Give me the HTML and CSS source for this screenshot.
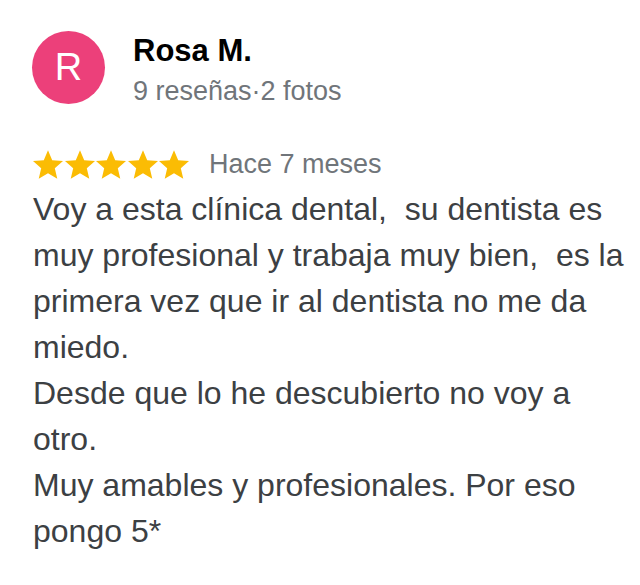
FILE: index.html
```
<!DOCTYPE html>
<html>

<head>
    <meta charset="UTF-8">
    <title>Reseña</title>
    <link rel="stylesheet" href="styles.css">
</head>

<body>
    <article class="resena">
        <header class="autor">
            <div class="avatar">R</div>
            <div class="autor-info">
                <h2 class="autor-nombre">Rosa M.</h2>
                <p class="autor-meta">9 reseñas·2 fotos</p>
            </div>
        </header>

        <div class="valoracion">
            <div class="estrellas">
                <svg viewBox="2 2 20 19"><path d="M12 17.27L18.18 21l-1.64-7.03L22 9.24l-7.19-.61L12 2 9.19 8.63 2 9.24l5.46 4.73L5.82 21z"/></svg>
                <svg viewBox="2 2 20 19"><path d="M12 17.27L18.18 21l-1.64-7.03L22 9.24l-7.19-.61L12 2 9.19 8.63 2 9.24l5.46 4.73L5.82 21z"/></svg>
                <svg viewBox="2 2 20 19"><path d="M12 17.27L18.18 21l-1.64-7.03L22 9.24l-7.19-.61L12 2 9.19 8.63 2 9.24l5.46 4.73L5.82 21z"/></svg>
                <svg viewBox="2 2 20 19"><path d="M12 17.27L18.18 21l-1.64-7.03L22 9.24l-7.19-.61L12 2 9.19 8.63 2 9.24l5.46 4.73L5.82 21z"/></svg>
                <svg viewBox="2 2 20 19"><path d="M12 17.27L18.18 21l-1.64-7.03L22 9.24l-7.19-.61L12 2 9.19 8.63 2 9.24l5.46 4.73L5.82 21z"/></svg>
            </div>
            <span class="fecha">Hace 7 meses</span>
        </div>

        <p class="texto">Voy a esta clínica dental,&nbsp; su dentista es muy profesional y trabaja muy bien,&nbsp; es la primera vez que ir al dentista no me da miedo.<br>Desde que lo he descubierto no voy a otro.<br>Muy amables y profesionales. Por eso pongo 5*</p>
    </article>
</body>

</html>
```

FILE: styles.css
```
body {
    margin: 0;
    background-color: white;
    font-family: "Liberation Sans", Arial, sans-serif;
}

.resena {
    padding: 31px 10px 0 33px;
}

.autor {
    display: flex;
    gap: 28px;
}

.avatar {
    width: 73px;
    height: 73px;
    margin-left: -1px;
    border-radius: 50%;
    background-color: #ec407a;
    color: white;
    font-size: 38px;
    line-height: 73px;
    text-align: center;
    flex-shrink: 0;
}

.autor-info {
    padding-top: 2px;
}

.autor-nombre {
    margin: 0;
    font-size: 31px;
    line-height: 36px;
    font-weight: bold;
    color: #000;
}

.autor-meta {
    margin: 4px 0 0;
    font-size: 27px;
    line-height: 36px;
    color: #70757a;
}

.valoracion {
    display: flex;
    align-items: center;
    gap: 20px;
    margin-top: 40px;
    height: 31px;
}

.estrellas {
    display: flex;
    gap: 1.5px;
}

.estrellas svg {
    width: 30px;
    height: 29px;
    fill: #fbbc04;
}

.fecha {
    font-size: 27px;
    color: #70757a;
}

.texto {
    margin: 6px 0 0;
    font-size: 32px;
    line-height: 46px;
    color: #3c4043;
}
```
